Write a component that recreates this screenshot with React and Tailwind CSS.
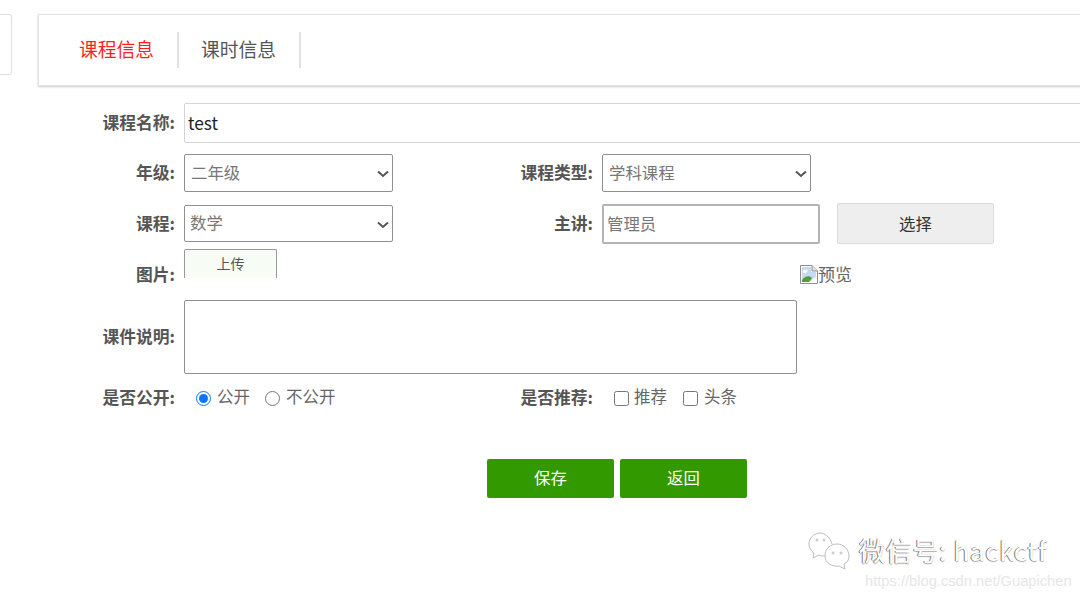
import React from 'react';

const Label = ({ className = 'w-[175px]', children }) => (
  <label className={`${className} shrink-0 text-right text-[16.8px] font-bold text-[#555] leading-none -mt-[1px]`}>{children}</label>
);

const Select = ({ value, className = 'h-[38px] pl-[6px]' }) => (
  <div className="relative ml-[9px] w-[209px]">
    <select className={`appearance-none block w-full border border-[#8f8f8f] rounded-[2px] pb-[2px] text-[16.4px] text-[#777] bg-white ${className}`}>
      <option>{value}</option>
    </select>
    <svg width="12" height="8" viewBox="0 0 12 8" fill="none" stroke="#555" strokeWidth="2" className="absolute right-[4px] top-[16px] pointer-events-none">
      <path d="M1 1.5L6 6L11 1.5" />
    </svg>
  </div>
);

const App = () => {
  return (
    <div className="relative w-[1080px] h-[598px] overflow-hidden bg-white text-[#666] font-['Microsoft_YaHei','Noto_Sans_CJK_SC',sans-serif]">
      <div className="flex items-start pt-[14px]">
        {/* stub of the left panel, cut off by the capture */}
        <div className="w-[12px] h-[61px] shrink-0 border border-l-0 border-[#dedee4] rounded-r-[3px]" />

        <div className="ml-[26px] w-[1060px] shrink-0">
          {/* tabs */}
          <div className="h-[72px] w-[1100px] border border-[#e2e2e6] shadow-[0_1px_2px_rgba(0,0,0,0.22)] flex items-center pl-[18px]">
            <a className="h-[36px] w-[122px] pl-[22px] pb-[2px] flex items-center text-[18.8px] text-[#ff1f1f] border-r-2 border-[#e2e2e2]">课程信息</a>
            <a className="h-[36px] w-[122px] pl-[22px] pb-[2px] flex items-center text-[18.8px] text-[#555] border-r-2 border-[#e2e2e2]">课时信息</a>
          </div>
        </div>
      </div>

      <form className="w-[1120px]">
        <div className="mt-[17px] h-[40px] flex items-center">
          <Label>课程名称:</Label>
          <input
            readOnly
            value="test"
            className="ml-[9px] w-[920px] h-[40px] border border-[#d5d5d8] rounded-[2px] px-[3px] pb-[2px] text-[17.3px] text-[#222] outline-none"
          />
        </div>

        <div className="mt-[11px] h-[38px] flex items-center">
          <Label>年级:</Label>
          <Select value="二年级" />
          <Label className="w-[200px]">课程类型:</Label>
          <Select value="学科课程" />
        </div>

        <div className="mt-[11px] h-[41px] flex items-center">
          <Label>课程:</Label>
          <Select value="数学" className="h-[37px] pl-[5px]" />
          <Label className="w-[200px]">主讲:</Label>
          <input
            readOnly
            value="管理员"
            className="ml-[9px] w-[218px] h-[40px] border-2 border-[#b4b4b4] rounded-[2px] px-[3px] pb-[2px] text-[16.4px] text-[#777] outline-none"
          />
          <button type="button" className="ml-[17px] w-[157px] h-[41px] bg-[#eeeeee] border border-[#dcdcdc] rounded-[2px] pb-[1px] text-[16.4px] text-[#333]">
            选择
          </button>
        </div>

        <div className="mt-[5px] h-[36px] flex items-start">
          <Label className="w-[175px] self-end pb-[2px]">图片:</Label>
          <div className="ml-[9px] w-[93px] h-[29px] border border-b-0 border-[#999] rounded-t-[2px] bg-[#f7fcf5] text-center text-sm text-[#555] pt-[3px]">
            上传
          </div>
          <div className="ml-[523px] mt-[15px] flex items-center text-[17px] text-[#666] leading-[20px]">
            <svg width="18" height="19" viewBox="0 0 18 19" className="shrink-0">
              <path d="M0.5 0.5H12L17.5 6V18.5H0.5Z" fill="#fff" stroke="#8f8f8f" />
              <path d="M2 2H11V7H16V12L9 17H2Z" fill="#c6daf5" />
              <path d="M3 5H8L6 8H3Z" fill="#fff" />
              <path d="M2 17V15C5 11 9 10 12 13L9 17Z" fill="#4f9f32" />
              <path d="M12 0.5V6H17.5" fill="#e2e2e2" stroke="#8f8f8f" />
            </svg>
            <span>预览</span>
          </div>
        </div>

        <div className="mt-[15px] h-[74px] flex items-center">
          <Label>课件说明:</Label>
          <textarea readOnly className="ml-[9px] w-[613px] h-[74px] border border-[#8f8f8f] rounded-[2px] resize-none outline-none" />
        </div>

        <div className="mt-[13px] h-[22px] flex items-center">
          <Label>是否公开:</Label>
          <div className="ml-[9px] w-[209px] flex items-center pl-[12px] text-[16.5px]">
            <input type="radio" name="pub" defaultChecked className="w-[15px] h-[15px] m-0 accent-[#0a75ff]" />
            <span className="ml-[6px] -mt-[3px]">公开</span>
            <input type="radio" name="pub" className="ml-[15px] w-[15px] h-[15px] m-0" />
            <span className="ml-[6px] -mt-[3px]">不公开</span>
          </div>
          <Label className="w-[200px]">是否推荐:</Label>
          <div className="ml-[9px] flex items-center pl-[12px] text-[16.5px]">
            <input type="checkbox" className="w-[15px] h-[15px] m-0" />
            <span className="ml-[5px] -mt-[3px]">推荐</span>
            <input type="checkbox" className="ml-[16px] w-[15px] h-[15px] m-0" />
            <span className="ml-[6px] -mt-[3px]">头条</span>
          </div>
        </div>

        <div className="mt-[50px] flex gap-[6px] pl-[487px]">
          <button type="button" className="w-[127px] h-[39px] bg-[#339900] rounded-[2px] pb-[2px] text-[16.4px] text-white">保存</button>
          <button type="button" className="w-[127px] h-[39px] bg-[#339900] rounded-[2px] pb-[2px] text-[16.4px] text-white">返回</button>
        </div>
      </form>

      {/* watermark over the capture */}
      <div className="absolute left-[808px] top-[530px] flex items-center">
        <svg width="46" height="40" viewBox="0 0 46 40" fill="none" stroke="#bdbdbd" strokeWidth="1">
          <path d="M24 14C22 7 17 3 12 3C6 3 1 8 1 14C1 18 3 21 6 23L5 28L11 25C13 26 15 26 17 26" fill="#fff" />
          <path d="M17 26C17 19 22 14 29 14C36 14 41 20 41 26C41 30 39 33 36 34L37 39L31 36C24 37 17 33 17 26Z" fill="#fff" />
          <circle cx="9" cy="10" r="1" />
          <circle cx="16" cy="10" r="1" />
          <circle cx="25" cy="23" r="1" />
          <circle cx="33" cy="23" r="1" />
        </svg>
        <span className="ml-[5px] text-[26px] leading-none tracking-[0.7px] text-white font-['Noto_Sans_CJK_SC',sans-serif] [text-shadow:-1px_0_0_#777,0_1px_1px_#aaa]">
          微信号: hackctf
        </span>
      </div>
      <div className="absolute left-[865px] top-[573px] text-[14.7px] leading-[16px] text-[#e6e6e6] font-['Liberation_Sans',sans-serif]">
        https://blog.csdn.net/Guapichen
      </div>
    </div>
  );
};

export default App;
